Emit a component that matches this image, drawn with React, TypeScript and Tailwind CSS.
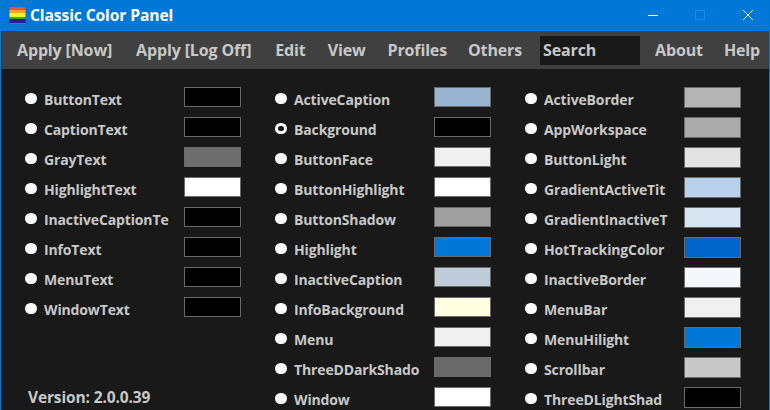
const col1 = [
  ['ButtonText', '#000000'],
  ['CaptionText', '#000000'],
  ['GrayText', '#6d6d6d'],
  ['HighlightText', '#ffffff'],
  ['InactiveCaptionTe', '#000000'],
  ['InfoText', '#000000'],
  ['MenuText', '#000000'],
  ['WindowText', '#000000'],
]

const col2 = [
  ['ActiveCaption', '#99b4d1'],
  ['Background', '#000000'],
  ['ButtonFace', '#f0f0f0'],
  ['ButtonHighlight', '#ffffff'],
  ['ButtonShadow', '#a0a0a0'],
  ['Highlight', '#0078d7'],
  ['InactiveCaption', '#bfcddb'],
  ['InfoBackground', '#ffffe1'],
  ['Menu', '#f0f0f0'],
  ['ThreeDDarkShado', '#696969'],
  ['Window', '#ffffff'],
]

const col3 = [
  ['ActiveBorder', '#b4b4b4'],
  ['AppWorkspace', '#ababab'],
  ['ButtonLight', '#e3e3e3'],
  ['GradientActiveTit', '#b9d1ea'],
  ['GradientInactiveT', '#d7e4f2'],
  ['HotTrackingColor', '#0066cc'],
  ['InactiveBorder', '#f4f7fc'],
  ['MenuBar', '#f0f0f0'],
  ['MenuHilight', '#0078d7'],
  ['Scrollbar', '#c8c8c8'],
  ['ThreeDLightShad', '#000000'],
]

function ColorRow({ name, color, selected, tall }: { name: string; color: string; selected?: boolean; tall?: boolean }) {
  return (
    <div className="flex items-center h-[30px] w-[250px] shrink-0">
      <div className="w-[20px] shrink-0 -mt-[1px] pl-[1px]">
        {selected ? (
          <div className="w-[11.5px] h-[11.5px] rounded-full border-[3px] border-white bg-[#191919]" />
        ) : (
          <div className="w-[11.5px] h-[11.5px] rounded-full bg-white" />
        )}
      </div>
      <span className="w-[140px] shrink-0 text-[#c8c8c8] whitespace-nowrap overflow-hidden">{name}</span>
      <div
        className={tall ? 'w-[57px] h-[21px] -mt-[3px] border border-[#6a6a6a]' : 'w-[57px] h-[20px] -mt-[4px] border border-[#6a6a6a]'}
        style={{ backgroundColor: color }}
      />
    </div>
  )
}

export default function App() {
  return (
    <div className="w-[770px] h-[410px] overflow-hidden flex flex-col border-x border-[#0078d7] bg-[#191919] font-['Open_Sans','Noto_Sans',sans-serif] font-bold text-[14px] tracking-[-0.01em]">
      <div className="h-[31px] shrink-0 bg-[#0078d7] flex items-center pl-[8px] text-white">
        <svg width="17" height="17" viewBox="0 0 17 17" className="shrink-0">
          <rect x="0.5" y="0" width="16" height="3" rx="1" fill="#e8562a" />
          <rect x="0.5" y="3" width="16" height="3" fill="#f5a623" />
          <rect x="0.5" y="6" width="16" height="4" fill="#f7ee2e" />
          <rect x="0.5" y="10" width="16" height="2" fill="#2ea84a" />
          <rect x="0.5" y="12" width="16" height="4" fill="#2a1a9c" />
          <rect x="0.5" y="16" width="16" height="1" fill="#8a4fc0" />
        </svg>
        <span className="ml-[4px] text-[15.7px]">Classic Color Panel</span>
        <div className="ml-auto flex items-center -mt-[1px]">
          <svg width="12" height="12" viewBox="0 0 12 12" className="mr-[35px]">
            <path d="M1 6.5H11" stroke="#ffffff" strokeWidth="1" />
          </svg>
          <svg width="12" height="12" viewBox="0 0 12 12" className="mr-[36px]">
            <rect x="1.5" y="1.5" width="9" height="9" fill="none" stroke="#1a8ae6" strokeWidth="1" />
          </svg>
          <svg width="12" height="12" viewBox="0 0 12 12" className="mr-[15px]">
            <path d="M1 1L11 11M11 1L1 11" stroke="#ffffff" strokeWidth="1" />
          </svg>
        </div>
      </div>

      <div className="h-[38px] shrink-0 bg-[#404040] flex items-center pl-[16px] gap-[22px] text-[#c8c8c8] text-[16px] whitespace-nowrap">
        <span>Apply [Now]</span>
        <span className="ml-[2px]">Apply [Log Off]</span>
        <span className="ml-[2px]">Edit</span>
        <span>View</span>
        <span>Profiles</span>
        <span className="-ml-[1px]">Others</span>
        <div className="w-[100px] h-[29px] bg-[#191919] pl-[3px] flex items-center -ml-[4px]">Search</div>
        <span className="-ml-[7px]">About</span>
        <span className="-ml-[1px]">Help</span>
      </div>

      <div className="flex-1 flex pl-[23px] pt-[15px]">
        <div className="w-[250px] flex flex-col">
          {col1.map(([n, c]) => (
            <ColorRow key={n} name={n} color={c} />
          ))}
          <div className="mt-auto mb-[5px] ml-[4px] text-[#c8c8c8] text-[15.5px]">Version: 2.0.0.39</div>
        </div>
        <div className="w-[250px] flex flex-col">
          {col2.map(([n, c]) => (
            <ColorRow key={n} name={n} color={c} selected={n === 'Background'} />
          ))}
        </div>
        <div className="w-[250px] flex flex-col">
          {col3.map(([n, c]) => (
            <ColorRow key={n} name={n} color={c} tall />
          ))}
        </div>
      </div>
    </div>
  )
}
